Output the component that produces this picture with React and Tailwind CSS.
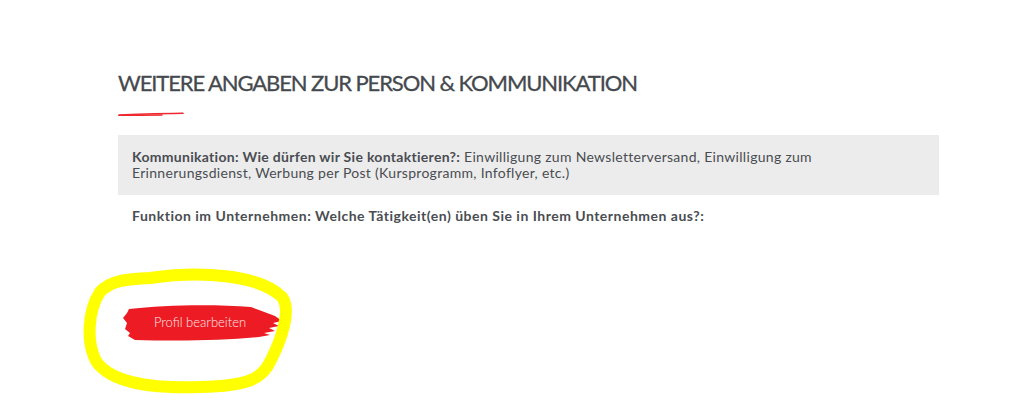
import React from 'react';

const BrushButton = ({ children }) => (
  <button
    type="button"
    className="relative flex h-[38px] w-[160px] items-center justify-center pr-[6px] text-[13px] font-light text-[#ffe8e8]"
  >
    <svg
      className="absolute inset-0 h-full w-full"
      viewBox="0 0 160 38"
      preserveAspectRatio="none"
      aria-hidden="true"
    >
      <path
        d="M6 5 C40 1 90 0 128 3 L136 6 L144 9 L152 12 L159 17 L150 19 L156 22 L146 24 L152 27 L141 29 L147 31 L136 33 C100 37 50 37 12 36 L5 32 L7 29 L2 25 L4 19 L0 14 L4 9 Z"
        fill="#ed1c24"
      />
    </svg>
    <span className="relative">{children}</span>
  </button>
);

const App = () => {
  return (
    <div className="relative h-[407px] w-full overflow-hidden bg-white font-['Lato','Open_Sans',sans-serif] text-[#4a4d52]">
      <div className="pl-[118px] pr-[85px] pt-[70px]">
        <h2 className="text-[22px] leading-[26px] tracking-[-1.1px] text-[#45494e] [-webkit-text-stroke:0.3px_#45494e]">
          WEITERE ANGABEN ZUR PERSON &amp; KOMMUNIKATION
        </h2>
        <svg className="mt-[16px] block" width="66" height="5" viewBox="0 0 66 5" aria-hidden="true">
          <path d="M1 3 C20 2 45 1.5 65 1.2" stroke="#ee2a30" strokeWidth="1.6" fill="none" strokeLinecap="round" />
          <path d="M1 3.4 C15 3.4 30 3.2 44 3" stroke="#ee2a30" strokeWidth="1.4" fill="none" strokeLinecap="round" />
        </svg>

        <div className="mt-[18px] bg-[#ececec] px-[14px] py-[14px] text-[14px] leading-[16px] tracking-[0.3px]">
          <span className="font-bold">Kommunikation: Wie dürfen wir Sie kontaktieren?:</span> Einwilligung zum
          Newsletterversand, Einwilligung zum Erinnerungsdienst, Werbung per Post (Kursprogramm, Infoflyer, etc.)
        </div>

        <p className="mt-[13px] px-[14px] text-[14px] leading-[16px] tracking-[0.5px] font-bold">
          Funktion im Unternehmen: Welche Tätigkeit(en) üben Sie in Ihrem Unternehmen aus?:
        </p>

        <div className="mt-[80px] pl-[5px]">
          <BrushButton>Profil bearbeiten</BrushButton>
        </div>
      </div>

      <svg
        className="pointer-events-none absolute left-0 top-0"
        width="1024"
        height="407"
        viewBox="0 0 1024 407"
        aria-hidden="true"
      >
        <path
          d="M150 278 C200 271 258 274 282 297 C292 310 281 340 271 360 C263 378 250 386 200 387 C150 389 110 382 96 361 C86 342 88 310 100 292 C111 280 128 279 150 278 Z"
          stroke="#ffff00"
          strokeWidth="12"
          fill="none"
          strokeLinejoin="round"
        />
      </svg>
    </div>
  );
};

export default App;
